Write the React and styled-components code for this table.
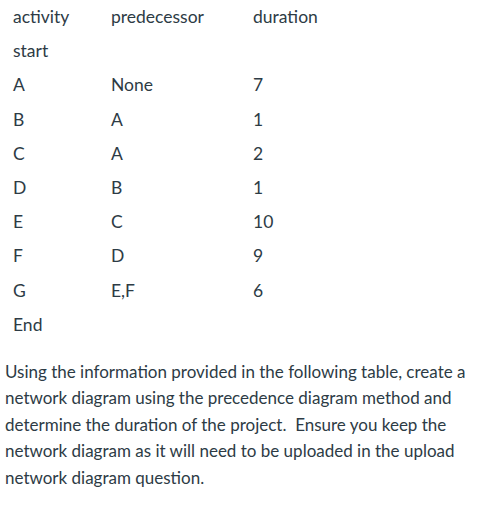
import React from "react";
import styled, { createGlobalStyle } from "styled-components";

const rows = [
  ["activity", "predecessor", "duration"],
  ["start", "", ""],
  ["A", "None", "7"],
  ["B", "A", "1"],
  ["C", "A", "2"],
  ["D", "B", "1"],
  ["E", "C", "10"],
  ["F", "D", "9"],
  ["G", "E,F", "6"],
  ["End", "", ""],
];

const App = () => {
  return (
    <Page>
      <Table>
        <tbody>
          {rows.map((r, i) => (
            <tr key={i}>
              <Cell w={98}>{r[0]}</Cell>
              <Cell w={142}>{r[1]}</Cell>
              <Cell>{r[2]}</Cell>
            </tr>
          ))}
        </tbody>
      </Table>
      <Para>
        Using the information provided in the following table, create a
        network diagram using the precedence diagram method and determine the
        duration of the project.&nbsp; Ensure you keep the network diagram as it
        will need to be uploaded in the upload network diagram question.
      </Para>
    </Page>
  );
};

const GlobalStyle = createGlobalStyle`
  body {
    margin: 0;
    background: #fff;
  }
`;

const Wrapper = styled.div`
  width: 500px;
  padding: 0 5px;
  box-sizing: border-box;
  font-family: Lato, "Liberation Sans", sans-serif;
  font-size: 17.5px;
  color: #2d3b45;
`;

const Page = ({ children }) => (
  <>
    <GlobalStyle />
    <Wrapper>{children}</Wrapper>
  </>
);

const Table = styled.table`
  border-collapse: collapse;
  border-spacing: 0;
`;

const Cell = styled.td`
  width: ${(p) => (p.w ? `${p.w - 16}px` : "auto")};
  height: 20.2px;
  padding: 7px 8px;
  line-height: 20px;
  vertical-align: middle;
  white-space: nowrap;
`;

const Para = styled.p`
  margin: 17px 0 0;
  font-size: 17px;
  line-height: 26.5px;
  width: 478px;
`;

export default App;
